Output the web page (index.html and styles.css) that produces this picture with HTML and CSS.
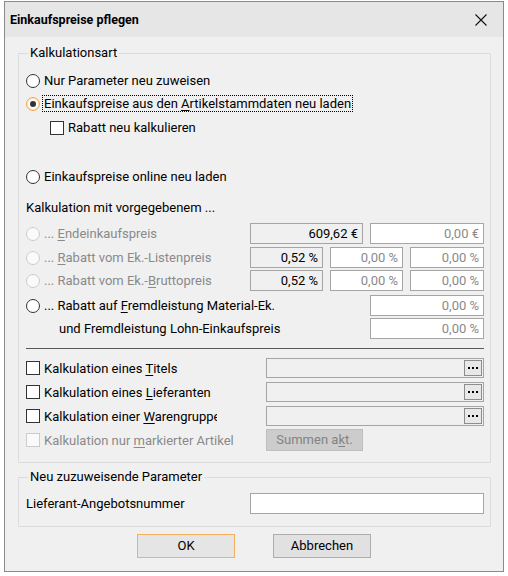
FILE: index.html
```html
<!DOCTYPE html>
<html>
<head>
<meta charset="utf-8">
<title>Einkaufspreise pflegen</title>
<link rel="stylesheet" href="styles.css">
</head>
<body>
<div class="window">
  <div class="titlebar">
    <span class="title">Einkaufspreise pflegen</span>
    <svg class="close" width="12" height="12" viewBox="0 0 12 12"><path d="M0.5 0.5L11.5 11.5M11.5 0.5L0.5 11.5" stroke="#111" stroke-width="1.1" fill="none"/></svg>
  </div>
  <div class="content">
    <fieldset class="group g1">
      <legend>Kalkulationsart</legend>
      <div class="row r1"><span class="radio"></span><span class="lbl">Nur Parameter neu zuweisen</span></div>
      <div class="row"><span class="radio checked"></span><span class="lbl focus">Einkaufspreise aus den <u>A</u>rtikelstammdaten neu laden</span></div>
      <div class="row r3 indent"><span class="check"></span><span class="lbl">Rabatt neu kalkulieren</span></div>
      <div class="row r4"><span class="radio"></span><span class="lbl">Einkaufspreise online neu laden</span></div>
      <div class="row r5"><span class="lbl">Kalkulation mit vorgegebenem ...</span></div>
      <div class="row r6">
        <div class="lab dis"><span class="radio dis"></span><span class="lbl">... <u>E</u>ndeinkaufspreis</span></div>
        <div class="field ro w113">609,62 €</div>
        <div class="field gray w114 gap">0,00 €</div>
      </div>
      <div class="row r7">
        <div class="lab dis"><span class="radio dis"></span><span class="lbl">... <u>R</u>abatt vom Ek.-Listenpreis</span></div>
        <div class="field ro w73">0,52 %</div>
        <div class="field gray w73 gap">0,00 %</div>
        <div class="field gray w74 gap">0,00 %</div>
      </div>
      <div class="row r8">
        <div class="lab dis"><span class="radio dis"></span><span class="lbl">... Rabatt vom Ek.-<u>B</u>ruttopreis</span></div>
        <div class="field ro w73">0,52 %</div>
        <div class="field gray w73 gap">0,00 %</div>
        <div class="field gray w74 gap">0,00 %</div>
      </div>
      <div class="row r9">
        <div class="lab wide"><span class="radio"></span><span class="lbl">... Rabatt auf <u>F</u>remdleistung Material-Ek.</span></div>
        <div class="field gray w114">0,00 %</div>
      </div>
      <div class="row r10">
        <div class="lab wide"><span class="lbl sub">und Fremdleistung Lohn-Einkaufspreis</span></div>
        <div class="field gray w114">0,00 %</div>
      </div>
      <div class="sep"></div>
      <div class="crow c1">
        <div class="clab"><span class="check"></span><span class="lbl">Kalkulation eines <u>T</u>itels</span></div>
        <div class="pick"><span class="dots"><svg width="11" height="3" viewBox="0 0 11 3"><rect x="0" y="0" width="2" height="2" fill="#000"/><rect x="4" y="0" width="2" height="2" fill="#000"/><rect x="8" y="0" width="2" height="2" fill="#000"/></svg></span></div>
      </div>
      <div class="crow">
        <div class="clab"><span class="check"></span><span class="lbl">Kalkulation eines <u>L</u>ieferanten</span></div>
        <div class="pick"><span class="dots"><svg width="11" height="3" viewBox="0 0 11 3"><rect x="0" y="0" width="2" height="2" fill="#000"/><rect x="4" y="0" width="2" height="2" fill="#000"/><rect x="8" y="0" width="2" height="2" fill="#000"/></svg></span></div>
      </div>
      <div class="crow">
        <div class="clab"><span class="check"></span><span class="lbl clip">Kalkulation einer <u>W</u>arengruppe</span></div>
        <div class="pick"><span class="dots"><svg width="11" height="3" viewBox="0 0 11 3"><rect x="0" y="0" width="2" height="2" fill="#000"/><rect x="4" y="0" width="2" height="2" fill="#000"/><rect x="8" y="0" width="2" height="2" fill="#000"/></svg></span></div>
      </div>
      <div class="crow">
        <div class="clab dis"><span class="check dis"></span><span class="lbl">Kalkulation nur <u>m</u>arkierter Artikel</span></div>
        <div class="btn-dis">Summen a<u>k</u>t.</div>
      </div>
    </fieldset>
    <fieldset class="group g2">
      <legend>Neu zuzuweisende Parameter</legend>
      <div class="row">
        <div class="lab"><span class="lbl">Lieferant-Angebotsnummer</span></div>
        <div class="field white w234"></div>
      </div>
    </fieldset>
    <div class="buttons">
      <div class="btn ok">OK</div>
      <div class="btn">Abbrechen</div>
    </div>
  </div>
</div>
</body>
</html>
```

FILE: styles.css
```css
* { box-sizing: border-box; }
html, body { margin: 0; padding: 0; background: #ffffff; }
body {
  font-family: Roboto, "Liberation Sans", sans-serif;
  font-size: 13px;
  color: #000;
}
.window {
  margin: 1px 0 0 4px;
  width: 500px;
  height: 571px;
  border: 1px solid #8a8a8a;
  background: #f0f0f0;
}
.titlebar {
  height: 35px;
  background: #e6e6e6;
  display: flex;
  align-items: center;
  padding: 0 16px 0 5px;
}
.title {
  font-weight: bold;
  font-size: 12.5px;
  flex: 1;
}
.close { display: block; }
.group {
  margin: 8px 12px 0 13px;
  padding: 8px 6px 10px 7px;
  border: 1px solid #dcdcdc;
  min-width: 0;
}
.group legend {
  padding: 0 2px;
  margin-left: 2px;
  line-height: 16px;
  font-size: 13px;
}
.g2 { margin-top: 6px; padding-top: 7px; padding-bottom: 11px; }
.row {
  display: flex;
  align-items: center;
  height: 23px;
}
.r3 { margin-top: 1px; }
.r4 { margin-top: 26px; }
.r5 { margin-top: 8px; }
.r6 { margin-top: 3px; }
.r7 { margin-top: 1px; }
.r9 { margin-top: 2px; }
.indent { padding-left: 24px; }
.lab {
  width: 224px;
  display: flex;
  align-items: center;
  white-space: nowrap;
}
.lab.wide { width: 344px; }
.lab.dis, .clab.dis { color: #8a8a8a; }
.lbl { white-space: nowrap; line-height: 15px; }
.lbl.sub { padding-left: 33px; }
.focus { outline: 1px dotted #000; outline-offset: 0; padding: 0 1px; margin-left: -1px; }
.radio {
  width: 14px;
  height: 14px;
  border-radius: 50%;
  border: 1px solid #333;
  background: #fff;
  margin-right: 4px;
  flex: none;
  display: flex;
  align-items: center;
  justify-content: center;
}
.radio.checked { border-color: #f2a550; box-shadow: inset 0 0 0 1px #fce0bd; }
.radio.checked::after {
  content: "";
  width: 6px;
  height: 6px;
  border-radius: 50%;
  background: #333;
}
.radio.dis { border-color: #cccccc; background: #fafafa; }
.check {
  width: 14px;
  height: 14px;
  border: 1px solid #333;
  background: #fff;
  margin-right: 4px;
  flex: none;
}
.check.dis { border-color: #cccccc; background: #fafafa; }
.field {
  height: 21px;
  border: 1px solid #a5a5a5;
  background: #fff;
  text-align: right;
  padding: 0 4px;
  line-height: 19px;
  white-space: nowrap;
}
.field.ro { background: #f0f0f0; }
.field.gray { color: #8a8a8a; }
.field.gap { margin-left: 7px; }
.w113 { width: 113px; }
.w114 { width: 114px; }
.w73 { width: 73px; }
.w74 { width: 74px; }
.w234 { width: 234px; }
.sep {
  height: 1px;
  background: #5a5a5a;
  margin-top: 8px;
}
.crow {
  display: flex;
  align-items: center;
  height: 24px;
}
.c1 { margin-top: 7px; }
.clab {
  width: 240px;
  display: flex;
  align-items: center;
}
.lbl.clip { max-width: 173px; overflow: hidden; }
.pick {
  width: 218px;
  height: 20px;
  border: 1px solid #a5a5a5;
  background: #f0f0f0;
  display: flex;
  justify-content: flex-end;
  align-items: center;
  padding-right: 1px;
}
.dots {
  width: 18px;
  height: 16px;
  border: 1px solid #8c8c8c;
  background: #e8e8e8;
  display: flex;
  align-items: center;
  justify-content: center;
}
.dots svg { display: block; margin-top: 1px; }
.btn-dis {
  width: 97px;
  height: 22px;
  border: 1px solid #bfbfbf;
  background: #cccccc;
  color: #838383;
  text-align: center;
  line-height: 20px;
}
.buttons {
  display: flex;
  justify-content: center;
  gap: 38px;
  margin-top: 7px;
}
.btn {
  width: 98px;
  height: 24px;
  border: 1px solid #adadad;
  background: #e1e1e1;
  text-align: center;
  line-height: 22px;
}
.btn.ok { border-color: #f4b05f; background: #e5e5e5; }
u { text-decoration: underline; text-underline-offset: 2px; }
```
